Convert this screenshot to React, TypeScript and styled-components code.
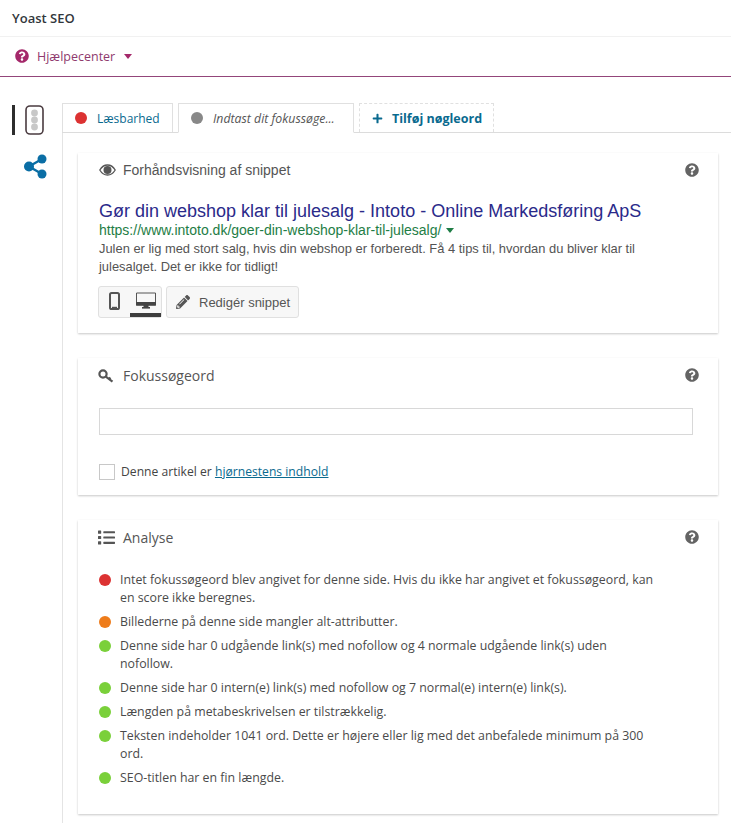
import React from "react";
import styled, { createGlobalStyle } from "styled-components";
import { FaQuestionCircle, FaList, FaPencilAlt, FaPlus } from "react-icons/fa";

const Global = createGlobalStyle`
  html, body { margin: 0; padding: 0; background: #fff; }
  body { font-family: "Open Sans", "Noto Sans", sans-serif; width: 731px; height: 823px; overflow: hidden; }
`;

const Page = styled.div`
  width: 731px;
  height: 823px;
  overflow: hidden;
  display: flex;
  flex-direction: column;
`;
const TitleBar = styled.div`
  height: 37px;
  box-sizing: border-box;
  padding: 0 12px 1px;
  display: flex;
  align-items: center;
  font-size: 13px;
  font-weight: 600;
  color: #32373c;
  border-bottom: 1px solid #f1f1f1;
  flex: none;
`;
const HelpBar = styled.div`
  height: 40px;
  box-sizing: border-box;
  padding: 0 15px 1px;
  display: flex;
  align-items: center;
  gap: 8px;
  color: #a4286a;
  border-bottom: 1px solid #93457a;
  flex: none;
`;
const HelpLabel = styled.span`
  font-size: 12.5px;
  color: #8f3a6e;
  margin-right: 1px;
`;
const Caret = styled.span<{ $color: string; $size: number }>`
  display: inline-block;
  width: 0;
  height: 0;
  border-left: ${(p) => p.$size}px solid transparent;
  border-right: ${(p) => p.$size}px solid transparent;
  border-top: ${(p) => p.$size + 1}px solid ${(p) => p.$color};
`;
const Body = styled.div`
  flex: 1;
  display: flex;
  min-height: 0;
`;
const Side = styled.div`
  width: 62px;
  box-sizing: border-box;
  padding-top: 28px;
  flex: none;
  display: flex;
  flex-direction: column;
  align-items: flex-start;
`;
const SideActive = styled.div`
  border-left: 3px solid #2d2d2d;
  height: 30px;
  margin-left: 12px;
  padding-left: 10px;
  display: flex;
  align-items: center;
`;
const SideShare = styled.div`
  margin: 19px 0 0 23px;
  display: flex;
`;
const Main = styled.div`
  flex: 1;
  min-width: 0;
  padding-top: 26px;
  display: flex;
  flex-direction: column;
`;
const Tabs = styled.div`
  display: flex;
  height: 30px;
  flex: none;
  box-sizing: border-box;
  border-bottom: 1px solid #dcdcdc;
  gap: 5px;
`;
const Tab = styled.div<{ $active?: boolean; $dashed?: boolean; $w: number }>`
  width: ${(p) => p.$w}px;
  height: ${(p) => (p.$active ? 30 : 29)}px;
  box-sizing: border-box;
  display: flex;
  align-items: center;
  background: #fff;
  border: 1px ${(p) => (p.$dashed ? "dashed" : "solid")} #e0e0e0;
  border-bottom: ${(p) => (p.$active ? "1px solid #fff" : "none")};
  padding-left: ${(p) => (p.$dashed ? 12 : 12)}px;
  gap: ${(p) => (p.$dashed ? 9 : 10)}px;
`;
const Dot = styled.span<{ $c: string }>`
  width: 12px;
  height: 12px;
  border-radius: 50%;
  background: ${(p) => p.$c};
  flex: none;
`;
const TabText = styled.span<{ $italic?: boolean }>`
  font-size: ${(p) => (p.$italic ? 12.3 : 12)}px;
  font-style: ${(p) => (p.$italic ? "italic" : "normal")};
  color: ${(p) => (p.$italic ? "#555" : "#0a6a8f")};
  white-space: nowrap;
`;
const AddText = styled.span`
  font-size: 12.5px;
  font-weight: 700;
  color: #0a6a8f;
  white-space: nowrap;
`;
const Panel = styled.div`
  flex: 1;
  border-left: 1px solid #e4e4e4;
  padding: 20px 13px 0 15px;
  display: flex;
  flex-direction: column;
  gap: 25px;
`;
const Card = styled.section<{ $h: number }>`
  height: ${(p) => p.$h}px;
  box-sizing: border-box;
  flex: none;
  background: #fff;
  box-shadow: 0 1px 2px rgba(0, 0, 0, 0.22);
  padding: 0 25px 0 21px;
  display: flex;
  flex-direction: column;
`;
const CardHead = styled.div`
  height: 35px;
  display: flex;
  align-items: center;
  color: #555;
  flex: none;
`;
const HeadIcon = styled.span<{ $up?: number; $left?: number }>`
  width: 24px;
  display: flex;
  color: #555;
  margin-top: ${(p) => -(p.$up ?? 0)}px;
  margin-left: ${(p) => -(p.$left ?? 0)}px;
  margin-right: ${(p) => p.$left ?? 0}px;
`;
const HeadTitle = styled.h3<{ $arial?: boolean }>`
  margin: 0;
  flex: 1;
  font-family: ${(p) => (p.$arial ? '"Liberation Sans", Arial, sans-serif' : "inherit")};
  font-size: 14px;
  font-weight: 400;
  color: #555;
  padding-bottom: ${(p) => (p.$arial ? 2 : 0)}px;
`;
const HelpIcon = styled.span`
  display: flex;
  color: #646464;
  margin: -2px -6px 0 0;
`;
const SnippetTitle = styled.div`
  font-family: "Liberation Sans", Arial, sans-serif;
  font-size: 18px;
  line-height: 21px;
  color: #2a2a8a;
  margin-top: 13px;
  white-space: nowrap;
`;
const SnippetUrl = styled.div`
  font-family: "Liberation Sans", Arial, sans-serif;
  font-size: 14px;
  line-height: 16px;
  color: #1e7d45;
  display: flex;
  align-items: center;
  gap: 5px;
`;
const SnippetDesc = styled.div`
  font-family: "Liberation Sans", Arial, sans-serif;
  font-size: 12.9px;
  line-height: 18px;
  color: #545454;
  margin-top: 2px;
  width: 560px;
`;
const ButtonRow = styled.div`
  display: flex;
  gap: 4px;
  margin: 10px 0 0 -1px;
`;
const BtnGroup = styled.div`
  height: 32px;
  width: 64px;
  box-sizing: border-box;
  background: #f7f7f7;
  border: 1px solid #e0e0e0;
  border-radius: 3px;
  display: flex;
  align-items: center;
`;
const DeviceBtn = styled.span<{ $w: number; $on?: boolean }>`
  width: ${(p) => p.$w}px;
  height: 30px;
  box-sizing: border-box;
  display: flex;
  justify-content: center;
  padding-top: 5px;
  border-bottom: ${(p) => (p.$on ? "4px solid #3d3d3d" : "none")};
`;
const EditBtn = styled.div`
  height: 32px;
  width: 133px;
  box-sizing: border-box;
  background: #f7f7f7;
  border: 1px solid #e0e0e0;
  border-radius: 3px;
  display: flex;
  align-items: center;
  padding-left: 9px;
  gap: 9px;
  font-family: "Liberation Sans", Arial, sans-serif;
  font-size: 13px;
  color: #555;
`;
const TextInput = styled.div`
  height: 27px;
  box-sizing: border-box;
  border: 1px solid #d8d8d8;
  margin-top: 15px;
  background: #fff;
`;
const CheckRow = styled.label`
  display: flex;
  align-items: center;
  gap: 6px;
  margin-top: 28px;
  font-size: 12.15px;
  color: #444;
`;
const CheckBox = styled.span`
  width: 16px;
  height: 16px;
  box-sizing: border-box;
  border: 1px solid #c8c8c8;
  background: #fff;
  flex: none;
`;
const LinkText = styled.a`
  color: #0a6a8f;
  text-decoration: underline;
`;
const Results = styled.ul`
  list-style: none;
  margin: 16px 0 0;
  padding: 0;
  display: flex;
  flex-direction: column;
  gap: 6px;
`;
const Result = styled.li`
  display: flex;
  gap: 9px;
  font-size: 12.35px;
  line-height: 18px;
  color: #4a4a4a;
  width: 560px;
`;
const ResultDot = styled(Dot)`
  margin-top: 3px;
`;

const TrafficLight = () => (
  <svg width="20" height="30" viewBox="0 0 20 30">
    <rect x="1" y="1" width="17" height="28" rx="4" fill="#fff" stroke="#4a3b40" strokeWidth="1.6" />
    <circle cx="9.5" cy="8" r="3.4" fill="#c8c8c8" />
    <circle cx="9.5" cy="15" r="3.4" fill="#c8c8c8" />
    <circle cx="9.5" cy="22" r="3.4" fill="#c8c8c8" />
  </svg>
);
const ShareIcon = () => (
  <svg width="24" height="25" viewBox="0 0 24 25">
    <path d="M6 12.5 L19 5 M6 12.5 L19 20" stroke="#0a6ea5" strokeWidth="2.4" fill="none" />
    <circle cx="6" cy="12.5" r="5" fill="#0a6ea5" />
    <circle cx="19" cy="5" r="4.5" fill="#0a6ea5" />
    <circle cx="19" cy="20" r="4.5" fill="#0a6ea5" />
  </svg>
);
const EyeIcon = () => (
  <svg width="17" height="12" viewBox="0 0 17 12">
    <path d="M0.8 6 C3 2.2 5.6 1 8.5 1 C11.4 1 14 2.2 16.2 6 C14 9.8 11.4 11 8.5 11 C5.6 11 3 9.8 0.8 6 Z" fill="none" stroke="#555" strokeWidth="1.3" />
    <circle cx="8.5" cy="6" r="4" fill="#555" />
  </svg>
);
const KeyIcon = () => (
  <svg width="16" height="14" viewBox="0 0 16 14">
    <circle cx="5" cy="5" r="3.6" fill="none" stroke="#555" strokeWidth="2.2" />
    <path d="M7.8 7.6 L14.5 12.6 M11 10 L12.5 8.6" stroke="#555" strokeWidth="2.2" fill="none" />
  </svg>
);
const MobileIcon = () => (
  <svg width="11" height="18" viewBox="0 0 11 18">
    <rect x="1" y="1" width="9" height="16" rx="1.6" fill="none" stroke="#555" strokeWidth="2" />
    <path d="M3 15.5 H8" stroke="#555" strokeWidth="1.4" />
  </svg>
);
const DesktopIcon = () => (
  <svg width="20" height="17" viewBox="0 0 20 17">
    <path d="M0.5 1 H19.5 V13 H0.5 Z" fill="none" stroke="#555" strokeWidth="1" />
    <rect x="0" y="10" width="20" height="3.6" fill="#444" />
    <rect x="7.5" y="13" width="5" height="2.4" fill="#444" />
    <rect x="6" y="15" width="8" height="1.6" fill="#444" />
  </svg>
);

const results: [string, string][] = [
  ["#dc3232", "Intet fokussøgeord blev angivet for denne side. Hvis du ikke har angivet et fokussøgeord, kan en score ikke beregnes."],
  ["#ee7c1b", "Billederne på denne side mangler alt-attributter."],
  ["#7ad03a", "Denne side har 0 udgående link(s) med nofollow og 4 normale udgående link(s) uden nofollow."],
  ["#7ad03a", "Denne side har 0 intern(e) link(s) med nofollow og 7 normal(e) intern(e) link(s)."],
  ["#7ad03a", "Længden på metabeskrivelsen er tilstrækkelig."],
  ["#7ad03a", "Teksten indeholder 1041 ord. Dette er højere eller lig med det anbefalede minimum på 300 ord."],
  ["#7ad03a", "SEO-titlen har en fin længde."],
];

export default function App() {
  return (
    <Page>
      <Global />
      <TitleBar>Yoast SEO</TitleBar>
      <HelpBar>
        <FaQuestionCircle size={14} />
        <HelpLabel>Hjælpecenter</HelpLabel>
        <Caret $color="#a4286a" $size={4} />
      </HelpBar>
      <Body>
        <Side>
          <SideActive><TrafficLight /></SideActive>
          <SideShare><ShareIcon /></SideShare>
        </Side>
        <Main>
          <Tabs>
            <Tab $w={111}><Dot $c="#dc3232" /><TabText>Læsbarhed</TabText></Tab>
            <Tab $w={176} $active><Dot $c="#888" /><TabText $italic>Indtast dit fokussøge...</TabText></Tab>
            <Tab $w={135} $dashed><FaPlus size={11} color="#0a6a8f" /><AddText>Tilføj nøgleord</AddText></Tab>
          </Tabs>
          <Panel>
            <Card $h={180}>
              <CardHead>
                <HeadIcon $up={2}><EyeIcon /></HeadIcon>
                <HeadTitle $arial>Forhåndsvisning af snippet</HeadTitle>
                <HelpIcon><FaQuestionCircle size={14} /></HelpIcon>
              </CardHead>
              <SnippetTitle>Gør din webshop klar til julesalg - Intoto - Online Markedsføring ApS</SnippetTitle>
              <SnippetUrl>https://www.intoto.dk/goer-din-webshop-klar-til-julesalg/<Caret $color="#1e7d45" $size={4} /></SnippetUrl>
              <SnippetDesc>Julen er lig med stort salg, hvis din webshop er forberedt. Få 4 tips til, hvordan du bliver klar til julesalget. Det er ikke for tidligt!</SnippetDesc>
              <ButtonRow>
                <BtnGroup>
                  <DeviceBtn $w={31}><MobileIcon /></DeviceBtn>
                  <DeviceBtn $w={31} $on><DesktopIcon /></DeviceBtn>
                </BtnGroup>
                <EditBtn><FaPencilAlt size={14} />Redigér snippet</EditBtn>
              </ButtonRow>
            </Card>
            <Card $h={137}>
              <CardHead>
                <HeadIcon $left={1}><KeyIcon /></HeadIcon>
                <HeadTitle>Fokussøgeord</HeadTitle>
                <HelpIcon><FaQuestionCircle size={14} /></HelpIcon>
              </CardHead>
              <TextInput />
              <CheckRow><CheckBox /><span>Denne artikel er <LinkText>hjørnestens indhold</LinkText></span></CheckRow>
            </Card>
            <Card $h={294}>
              <CardHead>
                <HeadIcon $up={1} $left={1}><FaList size={17} /></HeadIcon>
                <HeadTitle>Analyse</HeadTitle>
                <HelpIcon><FaQuestionCircle size={14} /></HelpIcon>
              </CardHead>
              <Results>
                {results.map(([c, t], i) => (
                  <Result key={i}><ResultDot $c={c} />{t}</Result>
                ))}
              </Results>
            </Card>
          </Panel>
        </Main>
      </Body>
    </Page>
  );
}
